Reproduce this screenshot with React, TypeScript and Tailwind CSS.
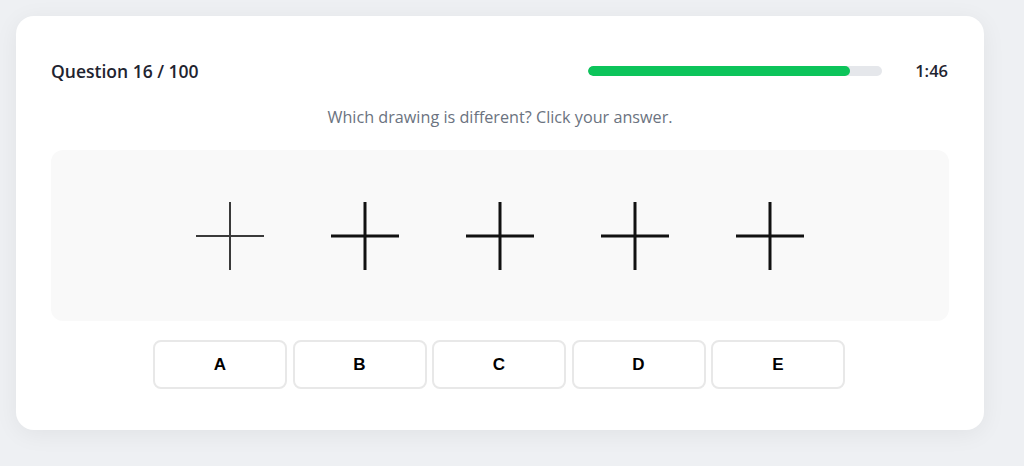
import { useState } from 'react';

const options = ['A', 'B', 'C', 'D', 'E'];

function Cross({ thin }: { thin?: boolean }) {
  return (
    <svg width="68" height="68" viewBox="0 0 68 68">
      <line x1="0" y1="34" x2="68" y2="34" stroke={thin ? '#3a3a3a' : '#111'} strokeWidth={thin ? 2 : 3} />
      <line x1="34" y1="0" x2="34" y2="68" stroke={thin ? '#3a3a3a' : '#111'} strokeWidth={thin ? 2 : 3} />
    </svg>
  );
}

export default function App() {
  const [selected, setSelected] = useState<string | null>(null);

  return (
    <div className="min-h-[466px] bg-[#eef0f3] p-4" style={{ fontFamily: '"Open Sans", "Noto Sans", sans-serif' }}>
      <div className="w-[968px] rounded-[18px] bg-white px-[35px] pt-[43px] pb-[41px] shadow-[0_4px_24px_rgba(0,0,0,0.06)]">
        {/* Header */}
        <div className="flex h-6 items-center">
          <h1 className="flex-1 text-[17.5px] font-semibold text-[#1f2430]">Question 16 / 100</h1>
          <div className="h-[10px] w-[294px] overflow-hidden rounded-full bg-[#e5e7eb]">
            <div className="h-full w-[89%] rounded-full bg-[#0cc45a]" />
          </div>
          <span className="ml-[33px] mr-[1px] text-[16.5px] font-semibold text-[#1f2430]">1:46</span>
        </div>

        <p className="mt-[23px] text-center text-[16.2px] leading-[22px] text-[#6b7380]">
          Which drawing is different? Click your answer.
        </p>

        {/* Drawings */}
        <div className="mt-[22px] flex h-[171px] items-center justify-center gap-[67px] rounded-xl bg-[#f9f9f9]">
          {options.map((o, i) => (
            <Cross key={o} thin={i === 0} />
          ))}
        </div>

        {/* Answers */}
        <div className="mt-[19px] flex justify-center gap-[5.5px] pr-[2px]">
          {options.map(o => (
            <button
              key={o}
              onClick={() => setSelected(o)}
              className={`h-[49px] w-[134px] rounded-lg border-2 bg-white text-[17px] font-bold text-black ${
                selected === o ? 'border-[#0cc45a]' : 'border-[#e8e8e8]'
              }`}
              style={{ fontFamily: '"Liberation Sans", Arial, sans-serif' }}
            >
              {o}
            </button>
          ))}
        </div>
      </div>
    </div>
  );
}
